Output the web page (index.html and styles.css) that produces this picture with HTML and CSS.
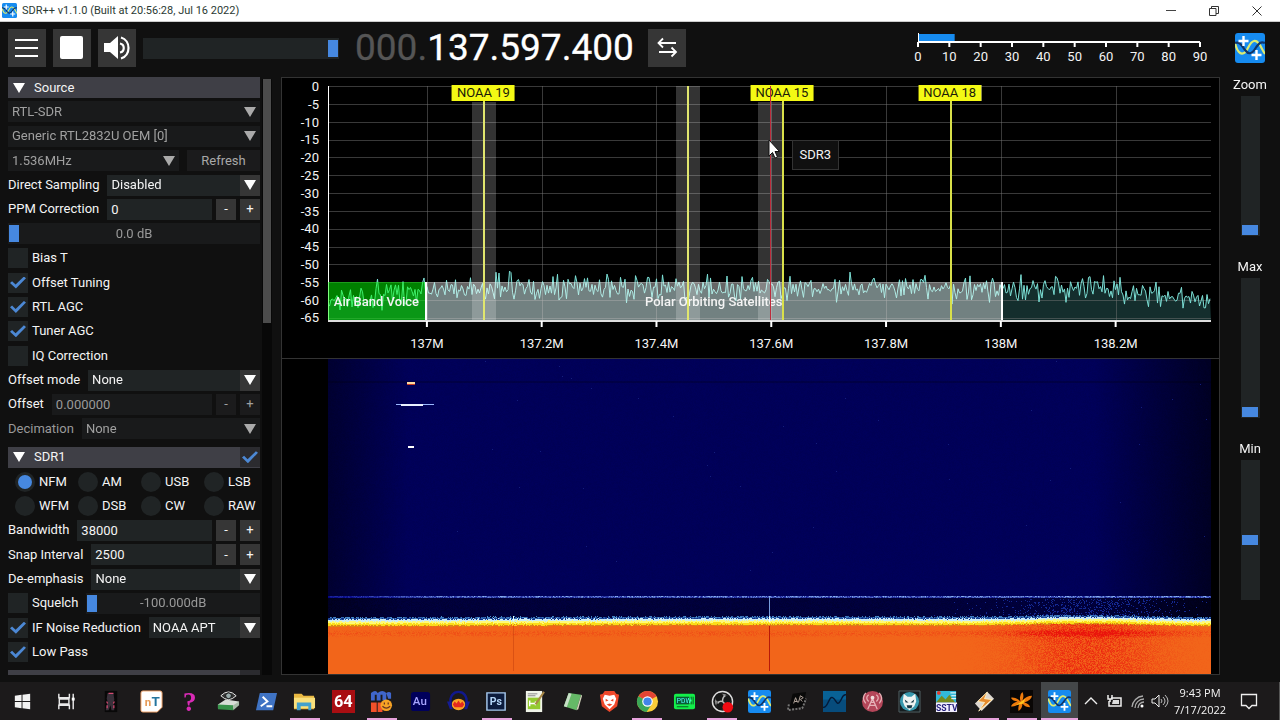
FILE: index.html
```html
<!DOCTYPE html>
<html lang="en">
<head>
<meta charset="utf-8">
<title>SDR++ v1.1.0</title>
<link rel="stylesheet" href="styles.css">
</head>
<body>
<svg class="defs" aria-hidden="true">
  <symbol id="sdr" viewBox="0 0 30 30">
    <rect width="30" height="30" rx="3" fill="#168bf0"/>
    <path d="M0 10c2 8 5 12 9 10S14 9 19 8s7 7 11 13" fill="none" stroke="#dcec72" stroke-width="2.2"/>
    <path d="M0 10c5-2 7 3 10 7s6 5 10-1 6-8 10-6" fill="none" stroke="#103568" stroke-width="2.2"/>
    <path d="M8.500 3v10M3.500 8h10M21.500 17v10M16.500 22h10" stroke="#fff" stroke-width="2.400"/>
  </symbol>
</svg>

<header class="titlebar">
  <svg class="title-icon"><use href="#sdr"/></svg>
  <h1 class="title">SDR++ v1.1.0 (Built at 20:56:28, Jul 16 2022)</h1>
  <button class="winbtn" aria-label="Minimize"><svg width="12" height="12"><path d="M1 5.500h10" stroke="#444"/></svg></button>
  <button class="winbtn" aria-label="Restore"><svg width="12" height="12"><path d="M1.500 3.500h6.500v7H1.500zM3.500 3.500v-2h7v7H8" fill="none" stroke="#333"/></svg></button>
  <button class="winbtn" aria-label="Close"><svg width="12" height="12"><path d="M1.500 1.500l9 9M10.500 1.500l-9 9" stroke="#333"/></svg></button>
</header>

<main class="app">
  <div class="toolbar">
    <button class="tool" aria-label="Menu"><svg width="38" height="38"><path d="M7 11h23M7 19h23M7 27h23" stroke="#fff" stroke-width="2"/></svg></button>
    <button class="tool" aria-label="Stop"><svg width="38" height="38"><rect x="7" y="7" width="23" height="23" rx="2" fill="#fff"/></svg></button>
    <button class="tool" aria-label="Mute"><svg width="38" height="38"><path d="M6 14h6l8-7v23l-8-7H6z" fill="#fff"/><path d="M22 14.500c5 1 5 8 0 9M23 8.500c10 3 10 18 0 21" fill="none" stroke="#fff" stroke-width="2.200"/></svg></button>
    <input class="range volume" type="range" min="0" max="100" value="100" aria-label="Volume">
    <div class="frequency"><span class="leading">000.</span>137.597.400</div>
    <button class="tool" aria-label="Tuning mode"><svg width="38" height="38"><path d="M28 14H11M15 9.500L10.500 14l4.500 4.500M11 23h17M23.500 18.500L28 23l-4.500 4.500" fill="none" stroke="#fff" stroke-width="1.800"/></svg></button>
    <svg class="snr" aria-label="Signal to noise ratio">
      <rect x="0" y="5" width="13%" height="8" fill="#168bf0"/>
      <path d="M.5 4v14" stroke="#fff"/>
      <line x1="0" x2="100%" y1="13" y2="13" stroke="#fff" stroke-width="2"/>
      <g class="snr-ticks"></g>
    </svg>
    <svg class="logo"><use href="#sdr"/></svg>
  </div>

  <div class="workspace">
    <form class="menu">
      <h2 class="section"><span class="caret"></span>Source</h2>
      <div class="row"><span class="pick off"><select aria-label="Source" disabled><option>RTL-SDR</option></select></span></div>
      <div class="row"><span class="pick off"><select aria-label="Device" disabled><option>Generic RTL2832U OEM [0]</option></select></span></div>
      <div class="row"><span class="pick off"><select aria-label="Sample rate" disabled><option>1.536MHz</option></select></span><button class="refresh" type="button" disabled>Refresh</button></div>
      <div class="row"><label for="ds">Direct Sampling</label><span class="pick"><select id="ds"><option>Disabled</option></select></span></div>
      <div class="row"><label for="ppm">PPM Correction</label><span class="stepper"><input class="text" id="ppm" value="0"><button type="button">-</button><button type="button">+</button></span></div>
      <div class="row"><span class="gauge"><input class="range dim" id="gain" type="range" value="0"><label for="gain">0.0 dB</label></span></div>
      <div class="row"><label class="check"><input type="checkbox">Bias T</label></div>
      <div class="row"><label class="check"><input type="checkbox" checked>Offset Tuning</label></div>
      <div class="row"><label class="check"><input type="checkbox" checked>RTL AGC</label></div>
      <div class="row"><label class="check"><input type="checkbox" checked>Tuner AGC</label></div>
      <div class="row"><label class="check"><input type="checkbox">IQ Correction</label></div>
      <div class="row"><label for="om">Offset mode</label><span class="pick"><select id="om"><option>None</option></select></span></div>
      <div class="row"><label for="off">Offset</label><span class="stepper"><input class="text" id="off" value="0.000000" disabled><button type="button" disabled>-</button><button type="button" disabled>+</button></span></div>
      <div class="row muted"><label for="dec">Decimation</label><span class="pick off"><select id="dec" disabled><option>None</option></select></span></div>
      <h2 class="section next"><span class="caret"></span>SDR1<label class="check end"><input type="checkbox" checked aria-label="SDR1 enabled"></label></h2>
      <div class="row modes">
        <label><input type="radio" name="mode" checked>NFM</label><label><input type="radio" name="mode">AM</label><label><input type="radio" name="mode">USB</label><label><input type="radio" name="mode">LSB</label>
      </div>
      <div class="row modes">
        <label><input type="radio" name="mode">WFM</label><label><input type="radio" name="mode">DSB</label><label><input type="radio" name="mode">CW</label><label><input type="radio" name="mode">RAW</label>
      </div>
      <div class="row"><label for="bw">Bandwidth</label><span class="stepper"><input class="text" id="bw" value="38000"><button type="button">-</button><button type="button">+</button></span></div>
      <div class="row"><label for="snap">Snap Interval</label><span class="stepper"><input class="text" id="snap" value="2500"><button type="button">-</button><button type="button">+</button></span></div>
      <div class="row"><label for="de">De-emphasis</label><span class="pick"><select id="de"><option>None</option></select></span></div>
      <div class="row"><label class="check"><input type="checkbox">Squelch</label><span class="gauge"><input class="range dim" id="sq" type="range" value="0"><label for="sq">-100.000dB</label></span></div>
      <div class="row"><label class="check"><input type="checkbox" checked>IF Noise Reduction</label><span class="pick"><select aria-label="Noise reduction preset"><option>NOAA APT</option></select></span></div>
      <div class="row"><label class="check"><input type="checkbox" checked>Low Pass</label></div>
      <div class="peek"></div>
    </form>
    <div class="scroll"><div class="scroll-thumb"></div></div>

    <section class="display">
      <div class="spectrum">
        <div class="levels"><span>0</span><span>-5</span><span>-10</span><span>-15</span><span>-20</span><span>-25</span><span>-30</span><span>-35</span><span>-40</span><span>-45</span><span>-50</span><span>-55</span><span>-60</span><span>-65</span></div>
        <div class="plot">
          <canvas class="trace"></canvas>
          <div class="band air">Air Band Voice</div>
          <div class="band polar">Polar Orbiting Satellites</div>
          <div class="mark noaa19"><span>NOAA 19</span></div>
          <div class="mark plain"></div>
          <div class="mark noaa15"><span>NOAA 15</span></div>
          <div class="mark noaa18"><span>NOAA 18</span></div>
          <div class="vfo one"></div>
          <div class="vfo two"></div>
          <div class="vfo three"></div>
          <div class="tip">SDR3</div>
          <svg class="pointer" width="12" height="20"><path d="M1 1v16l3.500-3.500L7 19l2.500-1-2.500-5.500h4.500z" fill="#fff" stroke="#111"/></svg>
        </div>
        <svg class="freqs"></svg>
      </div>
      <canvas class="waterfall"></canvas>
    </section>

    <aside class="sliders">
      <label for="zoom">Zoom</label><input class="range tall" id="zoom" type="range" value="0">
      <label for="max">Max</label><input class="range tall" id="max" type="range" value="0">
      <label for="min">Min</label><input class="range tall" id="min" type="range" value="42">
    </aside>
  </div>
</main>

<footer class="taskbar">
  <div class="system">
    <button aria-label="Start"><svg viewBox="0 0 24 24"><path d="M4 6l7-1v6.500H4zM12 5l8-1v7.500h-8zM4 12.500h7V19l-7-1zM12 12.500h8V20l-8-1z" fill="#f2f2f2"/></svg></button>
    <button aria-label="Task view"><svg viewBox="0 0 24 24"><path d="M4 4v4h11V4M4 20v-4h11v4M4.500 9.500h10v5h-10zM19 4v16" fill="none" stroke="#e8e8e8" stroke-width="1.500"/><path d="M17.500 8h3v3h-3z" fill="#fff"/></svg></button>
    <button aria-label="Bot"><svg viewBox="0 0 24 24"><path d="M6 1h13v22H6z" fill="#080808"/><path d="M9 3h6l1 7-1 3 1 8h-3l-1-5-2 5H7l2-9-1-3z" fill="#39303a"/><path d="M10 3.500h5M8 12l1 2M16 12l-1 2M8.500 16v3M15.500 16v3" stroke="#d64a72" stroke-width="1.300"/></svg></button>
  </div>
  <nav class="tasks">
    <button aria-label="nT"><svg viewBox="0 0 24 24"><path d="M3 1h18q2 0 2 2v15l-5 5H3q-2 0-2-2V3q0-2 2-2z" fill="#fff" stroke="#f1a266"/><text x="5" y="17" font-size="12" font-weight="700" fill="#e79a55">n</text><text x="12" y="17" font-size="14" font-weight="700" fill="#24749d">T</text></svg></button>
    <button aria-label="Help"><svg viewBox="0 0 24 24"><text class="serif" x="5" y="22" font-size="29" font-weight="700" fill="#d92bb6">?</text></svg></button>
    <button aria-label="Disk viewer"><svg viewBox="0 0 24 24"><path d="M1 15l8-5 14 2-6 8-16-1z" fill="#d7ded7"/><path d="M1 15l16 1v5L1 20z" fill="#37924a"/><path d="M17 16l6-4v4l-6 5z" fill="#a8bca9"/><path d="M4 6q8-8 16 0-8 8-16 0z" fill="#333" stroke="#eee"/><circle cx="12" cy="6" r="3" fill="#9aa" stroke="#111"/></svg></button>
    <button aria-label="PowerShell"><svg viewBox="0 0 24 24"><path d="M5 3h18l-4 18H1z" fill="#3f73c4"/><path d="M8 7l5 5-7 5M12 17h6" fill="none" stroke="#fff" stroke-width="2"/></svg></button>
    <button class="open" aria-label="Explorer"><svg viewBox="0 0 24 24"><path d="M1 4h8l2 2h11v14H1z" fill="#e9b841"/><path d="M1 8h22v11H1z" fill="#fae07b"/><path d="M4 21v-8h15v8h-3v-4H8v4z" fill="#43a0cc"/></svg></button>
    <button aria-label="64"><svg viewBox="0 0 24 24"><path d="M0 0h24v24H0z" fill="#a90e12"/><text x="2" y="18" font-size="17" font-weight="700" fill="#fff">64</text></svg></button>
    <button class="open" aria-label="Media"><svg viewBox="0 0 24 24"><path d="M1 11V3q5-4 7 0 5-4 9 0v8h-4V5h-2v6H7V5H5v6zM17 3q3-2 5 0v6h-3z" fill="#3f66cc"/><path d="M1 13h6v10H1zM8 13h5v10H8z" fill="#f2502a"/><circle cx="17" cy="16" r="6" fill="#f7a325"/><path d="M13 17q4 4 8 0M15 13v2M19 13v2" fill="none" stroke="#632" stroke-width="1.300"/></svg></button>
    <button aria-label="Audition"><svg viewBox="0 0 24 24"><rect x="2" y="2" width="20" height="20" rx="3" fill="#00005b"/><text x="4" y="16" font-size="12" font-weight="500" fill="#a7a5ff">Au</text></svg></button>
    <button aria-label="Audacity"><svg viewBox="0 0 24 24"><path d="M4 15C2 6 7 2 12 2s10 4 8 13" fill="none" stroke="#10188e" stroke-width="2.500"/><ellipse cx="12" cy="15" rx="7" ry="6" fill="#f9a325"/><path d="M6 15l2-3 2 2 2-3 2 3 2-2 2 3-2 3H8z" fill="#e32820"/><path d="M0 12h4l2 8H3zM20 12h4l-3 8h-3z" fill="#151c93"/></svg></button>
    <button class="open" aria-label="Photoshop"><svg viewBox="0 0 24 24"><path d="M2 3h19v18H2z" fill="#0c1c3d" stroke="#a7caef" stroke-width="1.500"/><text x="5" y="16" font-size="11" font-weight="700" fill="#b2d4f5">Ps</text></svg></button>
    <button aria-label="Notes"><svg viewBox="0 0 24 24"><path d="M3 1h17v22H3z" fill="#f0f4e9"/><path d="M5 8h13v12H5z" fill="#94cb2f"/><path d="M7 11v6M7 14h6M13 12v4" fill="none" stroke="#fff" stroke-width="1.500"/><path d="M22 2l-9 13" stroke="#a88745" stroke-width="2"/><path d="M5 4h10M5 6h8" stroke="#888"/></svg></button>
    <button aria-label="Notebook"><svg viewBox="0 0 24 24"><path d="M8 3l13 2-5 16-13-4z" fill="#65b967"/><path d="M8 3l3 1-5 14-3-1z" fill="#c8dfc7"/><path d="M21 5l-5 16 2-1 4-14z" fill="#d3d5bb"/></svg></button>
    <button aria-label="Brave"><svg viewBox="0 0 24 24"><path d="M7 1h10l2 3 3 1-2 12-8 6-8-6L2 5l3-1z" fill="#ee482b"/><path d="M7 5l5 1 5-1 2 4-2 6-5 5-5-5-2-6z" fill="#fff"/><path d="M8 9l3 2-3 1M16 9l-3 2 3 1M9 15l3-1 3 1-3 2z" fill="#ee482b"/></svg></button>
    <button class="open" aria-label="Chrome"><svg viewBox="0 0 24 24"><circle cx="12" cy="12" r="11" fill="#f9cc38"/><path d="M12 12L2.500 6.500a11 11 0 0 1 19 0z" fill="#e34434"/><path d="M12 12L2.500 6.500A11 11 0 0 0 11 23l6-9z" fill="#3aa757"/><circle cx="12" cy="12" r="5.500" fill="#fff"/><circle cx="12" cy="12" r="4.300" fill="#4284e8"/></svg></button>
    <button aria-label="PDW"><svg viewBox="0 0 24 24"><rect x="1" y="4" width="22" height="16" rx="2" fill="#13ef4a"/><path d="M3 7h14v8H3z" fill="#0a5a34"/><text x="4" y="14" font-size="7" fill="#53ffff">PDW</text><path d="M4 17.500h12M19 7v3M19 12v3M21 7v8" stroke="#075624"/></svg></button>
    <button class="open" aria-label="OBS"><svg viewBox="0 0 24 24"><circle cx="12" cy="12" r="10.500" fill="#171717" stroke="#ddd" stroke-width="1.500"/><circle cx="12" cy="12" r="8" fill="#8b8b8b"/><circle cx="9" cy="8" r="4.500" fill="#171717"/><circle cx="16" cy="10" r="4.500" fill="#171717"/><circle cx="10" cy="16" r="4.500" fill="#171717"/><path d="M12 12q-4-1-5 2M12 12q0-5 3-6M12 12q3 4 6 2" fill="none" stroke="#bbb" stroke-width="1.500"/><circle cx="17.500" cy="18" r="5.500" fill="#f00a12"/></svg></button>
    <button aria-label="SDR++"><svg><use href="#sdr"/></svg></button>
    <button aria-label="Chip"><svg viewBox="0 0 24 24"><path d="M7 4l14-2-3 15-15 3z" fill="#090909"/><path d="M3 15l-1 6 15-2 4-10" fill="none" stroke="#777" stroke-dasharray="2 1.500" stroke-width="2"/><path d="M8 14l2-6 2 5M9 12h3M13 13l2-7 3 2-3 2 2 2" fill="none" stroke="#b9aaa1"/></svg></button>
    <button aria-label="Waves"><svg viewBox="0 0 24 24"><path d="M0 1h24v22H0z" fill="#074c7c"/><path d="M0 1h24v9H0z" fill="#086296"/><path d="M0 18c5 2 6-12 10-10s4 8 7 5 3-9 7-8" fill="none" stroke="#041a38" stroke-width="1.500"/></svg></button>
    <button aria-label="Radio tower"><svg viewBox="0 0 24 24"><circle cx="12" cy="12" r="11" fill="#b44659"/><path d="M12 9L7 20M12 9l5 11M9 16h6M10 13h4M8 12q-4-4 0-7M16 12q4-4 0-7M5 14Q0 8 5 3M19 14q5-6 0-11" fill="none" stroke="#e6b1b7" stroke-width="1.300"/><circle cx="12" cy="8" r="2" fill="#edd"/></svg></button>
    <button aria-label="Wolf"><svg viewBox="0 0 24 24"><path d="M1 1h22v22H1z" fill="#151d20" stroke="#536064"/><circle cx="12" cy="12" r="10" fill="#3899ae"/><path d="M6 4l4 3h4l4-3 1 8-2 5-5 4-5-4-2-5z" fill="#eff4f2"/><path d="M7 10l4 3H8M17 10l-4 3h3M9 16l6 0-1 3h-4z" fill="#143744"/></svg></button>
    <button aria-label="SSTV"><svg viewBox="0 0 24 24"><path d="M1 1h21v12H1z" fill="#32b9d8"/><path d="M1 13l6-7 4 4 4-5 6 8z" fill="#768a1c"/><circle cx="4" cy="3" r="2" fill="#e13c2f"/><path d="M16 3h6M17 6h5M17 9h5" stroke="#fff"/><path d="M1 13h22v10H1z" fill="#f2efff"/><text x="1" y="22" font-size="9" font-weight="700" fill="#26227c">SSTV</text></svg></button>
    <button class="open" aria-label="Winamp"><svg viewBox="0 0 24 24"><path d="M2 14L15 2l7 7L9 22z" fill="#ddd7d0"/><path d="M15 2L5 12l7 1-6 9L20 10l-8-1z" fill="#e58a2b" stroke="#fff0c1"/></svg></button>
    <button class="open" aria-label="Butterfly"><svg viewBox="0 0 24 24"><path d="M0 0h24v24H0z" fill="#090605"/><path d="M11 12Q9 5 13 2q2 4 0 9 4-5 10-5-1 5-8 7 5 1 6 5-5 0-8-4 0 5-4 8-1-4 1-8-5 4-9 3 2-4 7-5-6-1-7-4 5-1 10 4z" fill="#ee7b0c"/><path d="M6 16l10-7-2 5z" fill="#ffc51c"/></svg></button>
    <button class="open active" aria-label="SDR++ running"><svg><use href="#sdr"/></svg></button>
  </nav>
  <div class="tray">
    <svg class="tray-icon chevron" viewBox="0 0 18 18"><path d="M3 12l6-6 6 6" fill="none" stroke="#eee" stroke-width="1.400"/></svg>
    <svg class="tray-icon" viewBox="0 0 18 18"><path d="M6 6h10v8H4V9M3 3v4h4V3M5 7v3" fill="none" stroke="#eee" stroke-width="1.500"/><path d="M8 8h6v4H7z" fill="#ddd"/></svg>
    <svg class="tray-icon" viewBox="0 0 18 18"><path d="M4 15A12 12 0 0 1 15 4M7 16a9 9 0 0 1 9-9M10 16a6 6 0 0 1 6-6" fill="none" stroke="#aaa" stroke-width="1.300"/><circle cx="14" cy="14" r="1.500" fill="#fff"/></svg>
    <svg class="tray-icon" viewBox="0 0 18 18"><path d="M1 7h3l4-4v12l-4-4H1z" fill="none" stroke="#eee"/><path d="M10 7q2 2 0 4M12 5q4 4 0 8M14 3q6 6 0 12" fill="none" stroke="#bbb"/></svg>
    <div class="clock"><time>9:43 PM</time><time>7/17/2022</time></div>
    <button class="notify" aria-label="Notifications"><svg width="18" height="18"><path d="M1.500 2.500h15v11H12l-3 3-3-3H1.500z" fill="none" stroke="#eee" stroke-width="1.300"/></svg></button>
  </div>
</footer>
<script src="app.js"></script>
</body>
</html>
```
FILE: styles.css
```css
* { box-sizing: border-box; }
body {
  margin: 0;
  height: 100vh;
  display: flex;
  flex-direction: column;
  overflow: hidden;
  background: #101010;
  color: #f4f4f4;
  font: 400 13px/16px Roboto, sans-serif;
}
button, input, select { font: inherit; color: inherit; border: 0; border-radius: 0; margin: 0; padding: 0; }
h1, h2 { margin: 0; font: inherit; }
svg { display: block; }
.defs { position: absolute; width: 0; height: 0; }

.titlebar { flex: none; height: 22px; display: flex; align-items: center; background: #fff; color: #2b3a33; border-bottom: 1px solid #ccc; }
.title-icon { width: 15px; height: 15px; margin: 0 5px 0 2px; }
.title { flex: 1; font: 400 11px/20px "Noto Sans", sans-serif; font-family: Roboto, sans-serif; }
.winbtn { width: 43px; height: 20px; display: grid; place-items: center; background: none; }
.titlebar .winbtn:last-child { margin-right: 2px; }

.app { flex: 1; min-height: 0; display: flex; flex-direction: column; padding: 7px 0 7px 8px; }
.toolbar { display: flex; align-items: center; height: 38px; margin-bottom: 10px; padding-right: 15px; }
.tool { flex: none; width: 38px; height: 38px; background: #363636; margin-right: 7px; }
.volume { width: 196px; margin-right: 16px; }
.frequency { font: 400 37px/38px Roboto, sans-serif; margin-right: 14px; color: #fff; white-space: nowrap; -webkit-text-stroke: 0.3px; }
.leading { color: #555; }
.snr { width: 282px; height: 38px; overflow: visible; margin: 0 35px 0 auto; }
.snr text, .freqs text { fill: #f4f4f4; text-anchor: middle; }
.logo { width: 30px; height: 30px; }

.workspace { flex: 1; min-height: 0; display: flex; }
.menu { width: 252px; flex: none; display: flex; flex-direction: column; justify-content: space-between; overflow: hidden; }
.row { flex: none; height: 21px; display: flex; align-items: center; gap: 8px; white-space: nowrap; }
.section { flex: none; height: 21px; display: flex; align-items: center; gap: 9px; padding-left: 5px; background: #3f3f46; }
.next { margin-top: 4px; }
.caret { border: solid transparent; border-width: 10px 6px 0; border-top-color: #fff; }
.end { margin-left: auto; background: #2b2b2f; }
.peek { flex: none; height: 5px; margin-top: 4px; background: linear-gradient(90deg, #3f3f46 92%, #2b2b2f 92%); }
.pick { flex: 1; min-width: 0; display: grid; grid-template-columns: 1fr 20px; height: 21px; background: #202425; }
.pick select { grid-area: 1 / 1 / 2 / 3; appearance: none; background: none; padding-left: 4px; opacity: 1; outline: 0; z-index: 1; }
.pick::after { content: ""; grid-area: 1 / 2; place-self: stretch; background: #363636; }
.pick::before { content: ""; grid-area: 1 / 2; place-self: center; z-index: 1; pointer-events: none; border: solid transparent; border-width: 10px 6px 0; border-top-color: #fff; }
.off { background: #191a1b; color: #a0a0a0; }
.off::after { background: none; }
.off::before { border-top-color: #aaa; }
.muted { color: #999; }
.refresh { width: 73px; height: 21px; background: #1b1b1c; color: #a8a8a8; }
.stepper { flex: 1; min-width: 0; display: flex; gap: 4px; }
.stepper button { flex: none; width: 20px; height: 21px; background: #363636; }
.stepper button:disabled { background: #1b1b1c; color: #a0a0a0; }
.text { flex: 1; min-width: 0; height: 21px; padding-left: 4px; background: #202425; }
.text:disabled { background: #191a1b; color: #999; }
.check { display: flex; align-items: center; gap: 4px; }
.check input { appearance: none; display: grid; place-items: center; width: 20px; height: 20px; background: #202425; }
.check input:checked::before { content: ""; width: 16px; height: 12px; background: #4c88d4; clip-path: polygon(0 54%, 13% 39%, 35% 67%, 87% 0, 100% 14%, 37% 100%); }
.end input { background: none; }
.modes { display: grid; grid-template-columns: repeat(4, 63px); gap: 0; padding-left: 7px; }
.modes label { display: flex; align-items: center; gap: 4px; }
.modes input { appearance: none; width: 20px; height: 20px; border-radius: 50%; background: #202425; display: grid; place-items: center; flex: none; }
.modes input:checked::before { content: ""; width: 14px; height: 14px; border-radius: 50%; background: #4688e0; }
.gauge { flex: 1; display: grid; align-items: center; justify-items: center; }
.gauge > * { grid-area: 1 / 1; }
.gauge label { color: #999; pointer-events: none; z-index: 1; }
.range { appearance: none; height: 21px; padding: 2px 1px; background: #202425; }
.range::-webkit-slider-thumb { appearance: none; width: 10px; height: 17px; background: #4688e0; }
.dim { width: 100%; background: #191a1b; }
.scroll { flex: none; width: 10px; margin: 2px 9px 0 2px; background: #080808; }
.scroll-thumb { width: 8px; height: 41%; margin-left: 1px; background: #4c4c4c; }

.display { flex: 1; min-width: 0; display: flex; flex-direction: column; background: #000; border: 1px solid #333; }
.spectrum { flex: 280; min-height: 0; display: grid; grid-template-columns: 46px 1fr 8px; grid-template-rows: 1fr 38px; border-bottom: 1px solid #333; }
.levels { grid-row: 1 / 3; display: flex; flex-direction: column; justify-content: space-between; text-align: right; padding: 1px 9px 31px 0; }
.plot { position: relative; margin-top: 8px; min-height: 0; }
.trace { position: absolute; width: 100%; height: 100%; }
.freqs { grid-area: 2 / 2; width: 100%; height: 38px; overflow: visible; }
.band { position: absolute; bottom: 0; height: 38px; text-align: center; line-height: 40px; white-space: nowrap; border-right: 2px solid #fff; font-weight: 500; }
.air { left: 0; width: 11.2%; background: rgba(0, 255, 0, .5); }
.polar { left: 11.2%; width: 65.2%; background: rgba(255, 255, 255, .4); }
.mark { position: absolute; top: 0; bottom: 0; width: 2px; background: #d9e04a; }
.mark span { position: absolute; left: 0; top: -1px; transform: translateX(-50%); padding: 0 5px; background: #f4f914; color: #1b1b08; white-space: nowrap; }
.noaa19 { left: 17.6%; }
.plain { left: 40.7%; }
.noaa15 { left: 51.4%; }
.noaa18 { left: 70.4%; }
.vfo { position: absolute; top: 0; bottom: 0; width: 2.7%; background: rgba(255, 255, 255, .2); }
.one { left: 16.3%; top: 16px; }
.two { left: 39.4%; }
.three { left: 48.7%; top: 16px; }
.three::after { content: ""; position: absolute; left: 50%; top: -16px; bottom: 0; width: 1px; background: #bd2c3c; }
.tip { position: absolute; left: 52.5%; top: 54px; padding: 6px 7px; border: 1px solid #333; background: #101010; }
.pointer { position: absolute; left: 49.8%; top: 53px; }
.waterfall { flex: 316; min-height: 0; margin: 0 8px 0 46px; display: block; width: calc(100% - 54px); }

.sliders { flex: none; width: 60px; display: flex; flex-direction: column; align-items: center; padding-bottom: 75px; }
.sliders label { margin-bottom: 3px; }
.sliders input + label { margin-top: 23px; }
.tall { writing-mode: vertical-lr; direction: rtl; flex: 1; min-height: 0; width: 19px; padding: 1px 2px; background: #202425; }
.tall::-webkit-slider-thumb { width: 16px; height: 10px; }

.taskbar { flex: none; height: 38px; display: flex; background: #1c1a1b; }
.taskbar button { background: none; display: grid; place-items: center; height: 38px; padding: 0; }
.system { display: grid; grid-template-columns: repeat(3, 44px); }
.taskbar button svg { width: 23px; height: 23px; }
.tasks { flex: 1; display: flex; }
.tasks button { flex: 40; min-width: 0; }
.tasks button:nth-child(-n+10) { flex-grow: 41; }
.tasks .open { background: linear-gradient(#e6a2dc, #e6a2dc) center bottom / 30px 2px no-repeat; }
.tasks .active { background: linear-gradient(#e6a2dc, #e6a2dc) center bottom / 100% 2px no-repeat #444749; }
.tray { flex: none; width: 202px; display: flex; align-items: center; gap: 5px; padding: 0 4px; border-right: 1px solid #555; }
.tray-icon { width: 18px; height: 18px; flex: none; }
.clock { flex: 1; display: flex; flex-direction: column; align-items: center; font: 400 11px/17px "Open Sans", sans-serif; }
.taskbar .notify { width: 36px; margin-right: 8px; }
.taskbar .notify svg { width: 18px; height: 18px; }
.serif { font-family: "Liberation Serif", serif; }
```
FILE: app.js
```js
const NS = 'http://www.w3.org/2000/svg';

function node(parent, name, attrs, text) {
  const el = document.createElementNS(NS, name);
  for (const key in attrs) el.setAttribute(key, attrs[key]);
  if (text !== undefined) el.textContent = text;
  parent.appendChild(el);
}

function random(seed) {
  return () => {
    seed = (seed * 1664525 + 1013904223) >>> 0;
    return seed / 4294967296;
  };
}

// Signal meter scale
const ticks = document.querySelector('.snr-ticks');
for (let i = 0; i < 10; i++) {
  const x = (i * 100 / 9) + '%';
  node(ticks, 'line', { x1: x, x2: x, y1: 13, y2: 18, stroke: '#fff', 'stroke-width': 2 });
  node(ticks, 'text', { x: x, y: 32 }, i * 10);
}

// Frequency scale
const start = 0.112;
const step = 0.13;
const names = ['137M', '137.2M', '137.4M', '137.6M', '137.8M', '138M', '138.2M'];
const scale = document.querySelector('.freqs');
node(scale, 'line', { x1: 0, x2: '100%', y1: 1, y2: 1, stroke: '#ddd', 'stroke-width': 2 });
names.forEach((name, i) => {
  const x = ((start + i * step) * 100) + '%';
  node(scale, 'line', { x1: x, x2: x, y1: 1, y2: 7, stroke: '#fff', 'stroke-width': 2 });
  node(scale, 'text', { x: x, y: 28 }, name);
});

function fit(canvas) {
  canvas.width = canvas.clientWidth;
  canvas.height = canvas.clientHeight;
  return canvas.getContext('2d');
}

function drawTrace() {
  const canvas = document.querySelector('.trace');
  const g = fit(canvas);
  const w = canvas.width;
  const h = canvas.height;
  const rnd = random(17);
  const pts = [];
  for (let x = 0; x <= w; x += 1.5) {
    const f = x / w;
    let base = 0.864;
    if (f < 0.11) base += (0.11 - f) * 0.6;
    if (f > 0.87) base += (f - 0.87) * 0.52;
    const n = (rnd() + rnd() + rnd() - 1.5) * 0.052;
    const spike = rnd() > 0.96 ? 0.022 : 0;
    pts.push([x, (base + n - spike) * h]);
  }
  const path = new Path2D();
  pts.forEach((p) => path.lineTo(p[0], p[1]));
  const area = new Path2D(path);
  area.lineTo(w, h);
  area.lineTo(0, h);
  g.fillStyle = '#142e2d';
  g.fill(area);
  g.fillStyle = 'rgba(120,120,120,.48)';
  for (let i = 0; i <= 13; i++) g.fillRect(0, Math.round(i * (h - 2) / 13), w, 1);
  names.forEach((name, i) => g.fillRect(Math.round((start + i * step) * w), 0, 1, h));
  g.strokeStyle = '#7ce0d6';
  g.lineWidth = 1;
  g.stroke(path);
  g.fillStyle = '#fff';
  g.fillRect(0, 0, 1, h);
}

function drawWaterfall() {
  const canvas = document.querySelector('.waterfall');
  const g = fit(canvas);
  const w = canvas.width;
  const h = canvas.height;
  const rnd = random(7);
  const img = g.createImageData(w, h);
  for (let y = 0; y < h; y++) {
    const v = y * 315 / h;
    for (let x = 0; x < w; x++) {
      const f = x / w;
      const n = rnd() - 0.5;
      const hump = Math.exp(-Math.pow((f - 0.86) / 0.08, 2));
      const edge = Math.min(1, 0.55 + f * 5, 0.4 + (1 - f) * 4.5);
      const t = v - 262 + hump * 2 - Math.abs(f - 0.5) * 2 + n * 1.5;
      let c = [0, 0, 88 * edge + n * 6];
      if (v > 238) c = [0, 0, 58 * edge + n * 12];
      if (v >= 22 && v < 24) c[2] *= 0.8;
      if (v > 239 && v < 260 && rnd() < hump * 0.25) c = [20, 40, 145];
      if (v >= 237 && v < 239) {
        const k = (0.55 + n * 0.8) * Math.min(1, f * 5 + 0.2) * (v < 238 ? 1 : 0.7);
        c = [150 * k, 195 * k, 130 + 120 * k];
      }
      if (t > -5) c = [45 + n * 70, 95 + n * 110, 170 + n * 80];
      if (t > -3) c = [205, 235, 245];
      if (t > -1) c = [255, 250, 120];
      if (t > 1) c = [252, 220, 25];
      if (t > 3) c = [218, 135, 20];
      if (t > 4) {
        const band = Math.exp(-Math.pow((v - 274) / 3, 2));
        let red = hump * (band * 0.6 + 0.4 + n * 0.75) - 0.03;
        red += band * (0.14 + n * 0.35);
        red = Math.max(0, Math.min(0.95, red + n * 0.05));
        c = [242 - red * 8, 101 - red * 85, 26 - red * 15];
      }
      if (rnd() > 0.9998 && v < 230) c = [20, 30, 125];
      const p = (y * w + x) * 4;
      img.data[p] = c[0];
      img.data[p + 1] = c[1];
      img.data[p + 2] = c[2];
      img.data[p + 3] = 255;
    }
  }
  g.putImageData(img, 0, 0);
  const sx = w / 883;
  const sy = h / 315;
  const bar = (x, y, bw, bh, color) => {
    g.fillStyle = color;
    g.fillRect(Math.round(x * sx), Math.round(y * sy), bw, bh);
  };
  bar(441, 238, 1, 20, '#789dde');
  bar(441, 257, 1, 6, '#f4ffff');
  bar(441, 267, 1, 45, '#b91908');
  bar(185, 257, 1, 5, '#dff');
  bar(185, 267, 1, 45, 'rgba(175,45,10,.35)');
  bar(79, 23, 8, 2, '#ffd9a0');
  bar(79, 25, 8, 1, '#c33c27');
  for (let x = 67; x < 106; x++) if (rnd() > 0.25) bar(x, 45, 1, 1, '#9ab8ff');
  bar(73, 45, 22, 2, '#e9f0ff');
  bar(80, 87, 6, 2, '#fff');
}

function draw() {
  drawTrace();
  drawWaterfall();
}
draw();
window.addEventListener('resize', draw);
```
